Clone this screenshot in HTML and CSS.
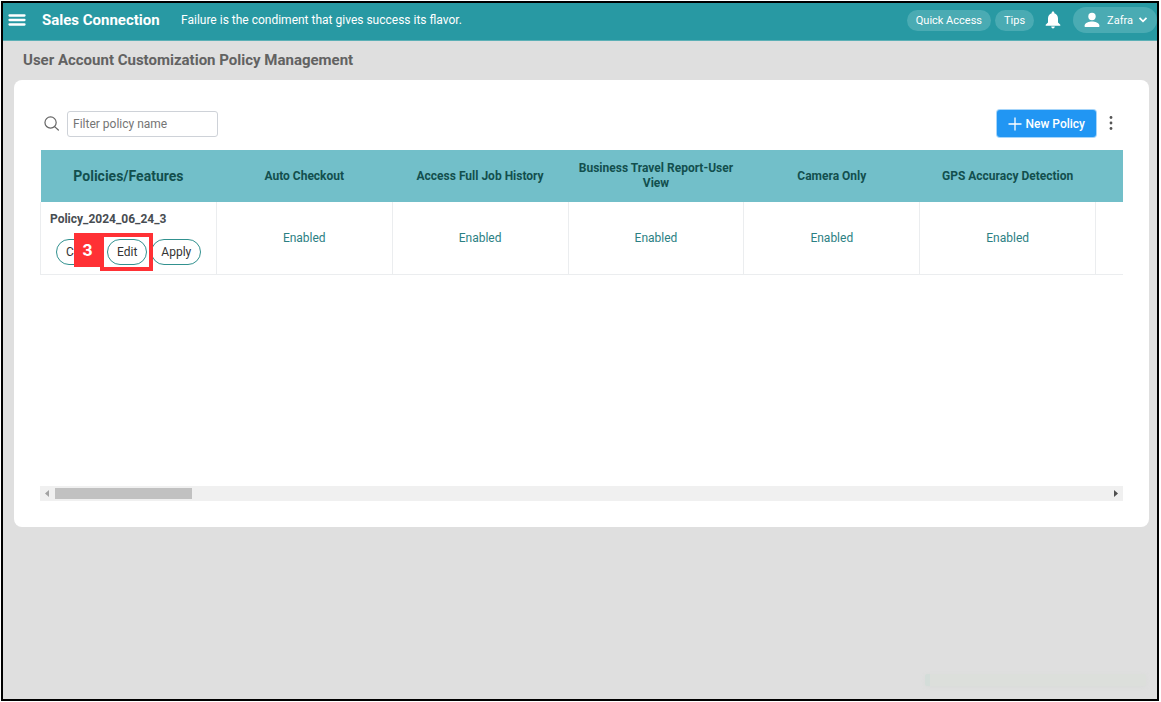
FILE: index.html
```html
<!DOCTYPE html>
<html lang="en">
<head>
<meta charset="utf-8">
<meta name="viewport" content="width=device-width, initial-scale=1">
<title>User Account Customization Policy Management</title>
<link rel="stylesheet" href="styles.css">
</head>
<body>
<div class="app">
  <header class="topbar">
    <button class="icon-button" type="button" aria-label="Menu">
      <svg width="18" height="14" viewBox="0 0 18 14" stroke="#fff" stroke-width="2.3" stroke-linecap="round"><path d="M1.500 2.500h15M1.500 7h15M1.500 11.500h15"/></svg>
    </button>
    <span class="brand">Sales Connection</span>
    <span class="quote">Failure is the condiment that gives success its flavor.</span>
    <nav class="actions">
      <button class="pill" type="button">Quick Access</button>
      <button class="pill" type="button">Tips</button>
      <button class="icon-button bell" type="button" aria-label="Notifications">
        <svg width="16" height="18" viewBox="0 0 16 18" fill="#fff"><path d="M8 0.500c.8 0 1.300.5 1.300 1.300v.5C11.700 2.900 13 5 13 7.500v4l2.300 2.300v1H.7v-1L3 11.500v-4C3 5 4.300 2.900 6.700 2.300v-.5C6.700 1 7.200.5 8 .5zM6.200 15.600h3.600c0 1.100-.8 1.900-1.800 1.900s-1.800-.8-1.800-1.900z"/></svg>
      </button>
      <button class="pill user" type="button">
        <svg width="16" height="16" viewBox="0 0 16 16" fill="#fff"><circle cx="8" cy="4.500" r="3.700"/><path d="M.7 15v-1.700c0-2.500 4.500-3.800 7.300-3.800s7.300 1.300 7.300 3.800V15z"/></svg>
        <span>Zafra</span>
        <svg class="caret" width="10" height="8" viewBox="0 0 10 8" fill="none" stroke="#fff" stroke-width="1.800"><path d="M1.500 1.800 5 5.300 8.500 1.800"/></svg>
      </button>
    </nav>
  </header>
  <main class="page">
    <h1 class="title">User Account Customization Policy Management</h1>
    <section class="card">
      <div class="toolbar">
        <label class="search-label" for="filter" aria-label="Filter policy name">
          <svg width="15" height="15" viewBox="0 0 16 16" fill="none" stroke="#666" stroke-width="1.300" stroke-linecap="round"><circle cx="7" cy="7" r="6"/><path d="m11.300 11.300 4 3.700"/></svg>
        </label>
        <input class="filter" id="filter" type="text" placeholder="Filter policy name">
        <button class="new-policy" type="button">
          <svg width="14" height="14" viewBox="0 0 14 14" stroke="#fff" stroke-width="1.300"><path d="M7 .5v13M.5 7h13"/></svg>
          New Policy
        </button>
        <button class="icon-button more" type="button" aria-label="More options">
          <svg width="4" height="16" viewBox="0 0 4 16" fill="#555"><circle cx="2" cy="1.500" r="1.400"/><circle cx="2" cy="7" r="1.400"/><circle cx="2" cy="12.500" r="1.400"/></svg>
        </button>
      </div>
      <div class="table-view">
        <table class="policies">
          <thead>
            <tr>
              <th class="first" scope="col">Policies/Features</th>
              <th scope="col">Auto Checkout</th>
              <th scope="col">Access Full Job History</th>
              <th scope="col">Business Travel Report-User View</th>
              <th scope="col">Camera Only</th>
              <th scope="col">GPS Accuracy Detection</th>
              <td></td>
            </tr>
          </thead>
          <tbody>
            <tr>
              <th class="policy" scope="row">
                <div class="policy-name">Policy_2024_06_24_3</div>
                <div class="policy-actions">
                  <button class="round" type="button">Copy</button>
                  <span class="marked">
                    <button class="round" type="button">Edit</button>
                    <span class="outline"></span>
                    <span class="step">3</span>
                  </span>
                  <button class="round" type="button">Apply</button>
                </div>
              </th>
              <td>Enabled</td>
              <td>Enabled</td>
              <td>Enabled</td>
              <td>Enabled</td>
              <td>Enabled</td>
              <td></td>
            </tr>
          </tbody>
        </table>
      </div>
      <div class="scrollbar">
        <svg width="15" height="15" viewBox="0 0 15 15" fill="#a3a3a3"><path d="M9 4v7L5 7.500z"/></svg>
        <div class="track"><div class="thumb"></div></div>
        <svg width="15" height="15" viewBox="0 0 15 15" fill="#505050"><path d="M6 4v7l4-3.500z"/></svg>
      </div>
    </section>
    <div class="toast"></div>
  </main>
</div>
</body>
</html>
```
FILE: styles.css
```css
* { box-sizing: border-box; }

body {
  margin: 0;
  padding: 1px 2px 1px 1px;
  background: #fff;
  font-family: Roboto, "Liberation Sans", sans-serif;
  font-size: 12px;
  color: #333;
}

button, input { font: inherit; }
svg { display: block; flex: none; }

.app {
  display: flex;
  flex-direction: column;
  min-height: calc(100vh - 2px);
  border: 2px solid #000;
  background: #dfdfdf;
}

.topbar {
  display: flex;
  align-items: center;
  height: 38px;
  padding: 0 0 3px 5px;
  background: #2899a3;
  border-bottom: 1px solid #5cb0b6;
  color: #fff;
}

.icon-button {
  padding: 0;
  border: 0;
  background: none;
}

.brand {
  width: 123px;
  margin-left: 16px;
  font-size: 15px;
  font-weight: 700;
}

.quote { margin-left: 16px; }

.actions {
  display: flex;
  align-items: center;
  margin-left: auto;
}

.pill {
  height: 21px;
  margin-right: 4px;
  padding: 0 9px;
  border: 0;
  border-radius: 13px;
  background: #4aabb3;
  color: #fff;
  font-size: 11px;
}

.bell { margin: 0 12px 0 7px; }

.user {
  display: flex;
  align-items: center;
  gap: 7px;
  height: 26px;
  margin-right: 0;
  padding: 0 9px 0 11px;
}

.caret { margin-left: -2px; }

.page {
  display: flex;
  flex-direction: column;
  flex: 1;
  padding: 0 8px 13px 11px;
}

.title {
  margin: 0;
  padding: 0 9px;
  font-size: 15px;
  line-height: 39px;
  font-weight: 700;
  color: #626262;
}

.card {
  display: flex;
  flex-direction: column;
  padding: 30px 26px;
  min-height: 447px;
  border-radius: 8px;
  background: #fff;
}

.toolbar {
  display: flex;
  align-items: center;
  height: 27px;
  padding: 0 10px 0 4px;
}

.filter {
  width: 151px;
  height: 26px;
  margin-left: 8px;
  padding: 0 5px;
  border: 1px solid #ced2d8;
  border-radius: 3px;
  color: #333;
}

.filter::placeholder { color: #757575; }

.new-policy {
  display: flex;
  align-items: center;
  gap: 4px;
  height: 27px;
  margin-left: auto;
  padding: 0 11px;
  border: 0;
  border-radius: 3px;
  background: #2196f3;
  box-shadow: 0 0 0 1px #a6d5fa;
  color: #fff;
  font-weight: 500;
}

.more { margin-left: 13px; }

.table-view {
  margin-top: 13px;
  overflow: hidden;
}

.policies {
  width: 1232px;
  table-layout: fixed;
  border-collapse: collapse;
}

.policies thead { background: #72bfc9; }

.policies thead th {
  height: 52px;
  padding: 0 8px;
  line-height: 15px;
  font-weight: 700;
  color: #124f4e;
}

.policies thead .first { font-size: 14px; }

.policies tbody td,
.policies tbody th {
  height: 72px;
  padding: 0;
  border: 1px solid #ebedef;
  border-top: 0;
}

.policies tbody td {
  text-align: center;
  color: #2b8083;
}

.policies .policy {
  padding: 0 9px;
  text-align: left;
  vertical-align: top;
}

.policy-name {
  padding-top: 9px;
  line-height: 16px;
  font-weight: 700;
  color: #474d52;
}

.policy-actions {
  display: flex;
  gap: 4px;
  margin-top: 12px;
  padding-left: 6px;
  font-weight: 400;
}

.round {
  display: block;
  height: 26px;
  padding: 0 9px;
  border: 1px solid #31918f;
  border-radius: 13px;
  background: #fff;
  color: #333;
}

.marked { position: relative; }

.outline {
  position: absolute;
  inset: -6px -6px -6px -7px;
  border: 4px solid #ff3135;
  pointer-events: none;
}

.step {
  position: absolute;
  top: -6px;
  right: 47px;
  width: 26px;
  height: 34px;
  background: #ff3135;
  color: #fff;
  font: 700 16px/34px Inter, sans-serif;
  text-align: center;
}

.scrollbar {
  display: flex;
  height: 15px;
  margin-top: auto;
  margin-bottom: -4px;
  background: #f0f0f0;
}

.track {
  flex: 1;
  padding: 2px 0;
}

.thumb {
  width: 13%;
  height: 11px;
  background: #c1c1c1;
}

.toast {
  width: 221px;
  height: 12px;
  margin: auto 3px 0 auto;
  border-left: 5px solid #d4ddd9;
  border-radius: 2px;
  background: #dcdfdb;
  box-shadow: 0 1px 4px #d9dbd9;
}
```
